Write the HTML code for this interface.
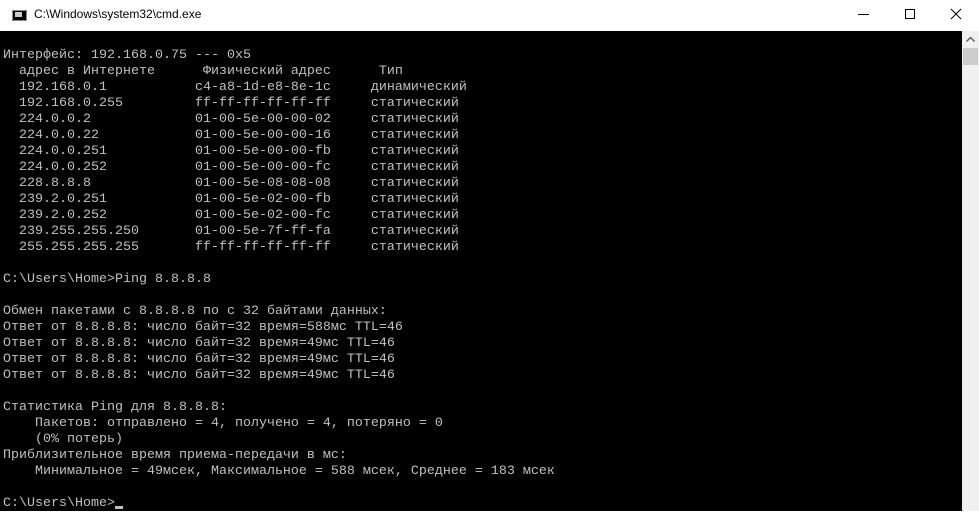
<!DOCTYPE html>
<html><head><meta charset="utf-8"><style>
body{margin:0;width:979px;height:511px;overflow:hidden;background:#fff;position:relative;font-family:"Liberation Sans",sans-serif}
#tb{position:absolute;left:0;top:0;width:979px;height:31px;background:#fff}
#title{position:absolute;left:34px;top:7px;font-size:12px;color:#000}
#ic{position:absolute;left:12px;top:10px;width:15px;height:11px;background:#000;border:1px solid #888;box-sizing:border-box}
#ic span{position:absolute;left:2px;top:1px;width:7px;height:5px;background:#fff;opacity:.8}
#con{position:absolute;left:0;top:31px;width:962px;height:480px;background:#000}
pre{margin:0;position:absolute;left:3px;top:17px;font-family:"Liberation Mono","Noto Sans CJK SC",monospace;font-size:13.33px;line-height:16px;color:#c0c0c0}
#sb{position:absolute;left:962px;top:31px;width:17px;height:480px;background:#f0f0f0}
#th{position:absolute;left:963px;top:48px;width:15px;height:17px;background:#cdcdcd}
#cur{position:absolute;left:115px;top:506px;width:8px;height:3px;background:#c0c0c0}
</style></head><body>
<div id="tb">
<div id="ic"><span></span></div>
<div id="title">C:\Windows\system32\cmd.exe</div>
<svg width="979" height="31" style="position:absolute;left:0;top:0">
<line x1="858" y1="14.5" x2="869" y2="14.5" stroke="#000" stroke-width="1"/>
<rect x="905.5" y="9.5" width="9" height="9" fill="none" stroke="#000"/>
<path d="M951 9L961 19M961 9L951 19" stroke="#000" stroke-width="1"/>
</svg>
</div>
<div id="con"><pre>Интерфейс: 192.168.0.75 --- 0x5
  адрес в Интернете      Физический адрес      Тип
  192.168.0.1           c4-a8-1d-e8-8e-1c     динамический
  192.168.0.255         ff-ff-ff-ff-ff-ff     статический
  224.0.0.2             01-00-5e-00-00-02     статический
  224.0.0.22            01-00-5e-00-00-16     статический
  224.0.0.251           01-00-5e-00-00-fb     статический
  224.0.0.252           01-00-5e-00-00-fc     статический
  228.8.8.8             01-00-5e-08-08-08     статический
  239.2.0.251           01-00-5e-02-00-fb     статический
  239.2.0.252           01-00-5e-02-00-fc     статический
  239.255.255.250       01-00-5e-7f-ff-fa     статический
  255.255.255.255       ff-ff-ff-ff-ff-ff     статический

C:\Users\Home>Ping 8.8.8.8

Обмен пакетами с 8.8.8.8 по с 32 байтами данных:
Ответ от 8.8.8.8: число байт=32 время=588мс TTL=46
Ответ от 8.8.8.8: число байт=32 время=49мс TTL=46
Ответ от 8.8.8.8: число байт=32 время=49мс TTL=46
Ответ от 8.8.8.8: число байт=32 время=49мс TTL=46

Статистика Ping для 8.8.8.8:
    Пакетов: отправлено = 4, получено = 4, потеряно = 0
    (0% потерь)
Приблизительное время приема-передачи в мс:
    Минимальное = 49мсек, Максимальное = 588 мсек, Среднее = 183 мсек

C:\Users\Home></pre></div>
<div id="cur"></div>
<div id="sb"></div>
<div id="th"></div>
<svg width="17" height="17" style="position:absolute;left:962px;top:31px"><path d="M4.5 10.5L8.5 6.5L12.5 10.5" fill="none" stroke="#606060" stroke-width="1.5"/></svg>
</body></html>
